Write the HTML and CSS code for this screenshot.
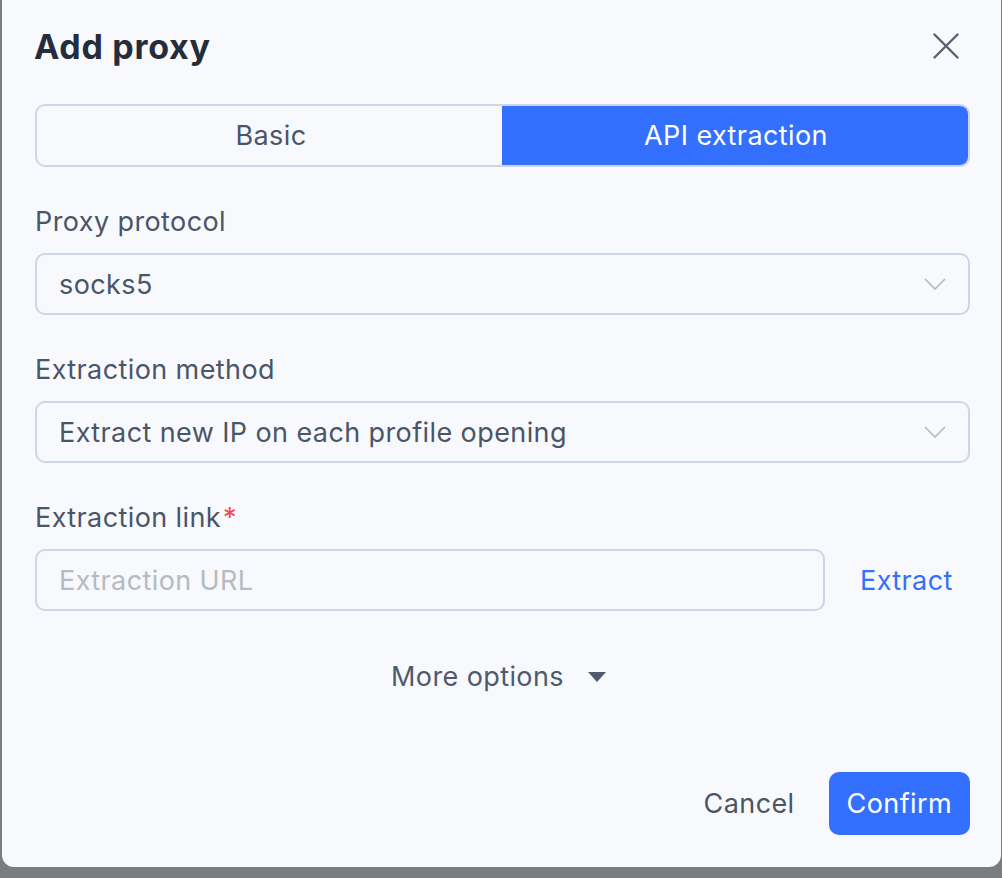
FILE: index.html
```html
<!DOCTYPE html>
<html lang="en">
<head>
    <meta charset="UTF-8">
    <meta name="viewport" content="width=device-width, initial-scale=1.0">
    <title>Add proxy</title>
    <link rel="stylesheet" href="styles.css">
</head>
<body>
    <div class="backdrop">
        <div class="dialog">
            <div class="dialog-header">
                <h1>Add proxy</h1>
                <button class="close-btn" aria-label="Close">
                    <svg width="26" height="26" viewBox="0 0 26 26">
                        <path d="M1.5 1.5 L24.5 24.5 M24.5 1.5 L1.5 24.5" stroke="#596070" stroke-width="2.4" stroke-linecap="round" fill="none"/>
                    </svg>
                </button>
            </div>

            <div class="tabs">
                <div class="tab">Basic</div>
                <div class="tab active">API extraction</div>
            </div>

            <div class="field">
                <label>Proxy protocol</label>
                <div class="select">
                    <span>socks5</span>
                    <svg class="chevron" width="22" height="12" viewBox="0 0 22 12">
                        <path d="M1 1 L11 11 L21 1" stroke="#b3b8c2" stroke-width="1.6" fill="none"/>
                    </svg>
                </div>
            </div>

            <div class="field">
                <label>Extraction method</label>
                <div class="select">
                    <span>Extract new IP on each profile opening</span>
                    <svg class="chevron" width="22" height="12" viewBox="0 0 22 12">
                        <path d="M1 1 L11 11 L21 1" stroke="#b3b8c2" stroke-width="1.6" fill="none"/>
                    </svg>
                </div>
            </div>

            <div class="field">
                <label>Extraction link<span class="required">*</span></label>
                <div class="input-row">
                    <input type="text" placeholder="Extraction URL">
                    <a class="link-btn" href="#">Extract</a>
                </div>
            </div>

            <div class="more-options">
                More options
                <svg width="18" height="10" viewBox="0 0 18 10">
                    <path d="M0 0 L18 0 L9 10 Z" fill="#4f5a6e"/>
                </svg>
            </div>

            <div class="dialog-footer">
                <button class="btn-text">Cancel</button>
                <button class="btn-primary">Confirm</button>
            </div>
        </div>
    </div>
</body>
</html>
```

FILE: styles.css
```css
body {
    margin: 0;
    padding: 0;
    background-color: #7b7c7e;
    font-family: Inter, "Noto Sans", sans-serif;
    font-size: 27px;
    letter-spacing: 0.4px;
    color: #4b5568;
    overflow: hidden;
}
.backdrop {
    height: 878px;
    padding-left: 2px;
}
.dialog {
    width: 999px;
    height: 867px;
    box-sizing: border-box;
    background-color: #f8f9fc;
    border-radius: 0 0 12px 12px;
    padding: 26px 31px 32px 33px;
    display: flex;
    flex-direction: column;
}
.dialog-header {
    display: flex;
    align-items: center;
    justify-content: space-between;
    height: 40px;
}
.dialog-header h1 {
    margin: 0 0 0 -1px;
    font-size: 34px;
    font-weight: 700;
    letter-spacing: 0.7px;
    color: #252c3b;
}
.close-btn {
    background: none;
    border: none;
    padding: 0;
    margin-right: 11px;
    display: flex;
    cursor: pointer;
}
.tabs {
    display: flex;
    margin-top: 38px;
    height: 63px;
    border: 2px solid #ccd6e8;
    border-radius: 10px;
    overflow: hidden;
    box-sizing: border-box;
}
.tab {
    flex: 1;
    display: flex;
    align-items: center;
    justify-content: center;
    color: #4b5568;
}
.tab.active {
    background-color: #3370ff;
    color: #fff;
    margin: -2px -2px -2px -3px;
}
.field {
    margin-top: 37px;
}
.field label {
    display: block;
    line-height: 36px;
    margin-bottom: 13px;
    color: #4b5568;
}
.required {
    color: #f5484a;
    margin-left: 2px;
}
.select {
    height: 62px;
    box-sizing: border-box;
    border: 2px solid #ccd6e8;
    border-radius: 10px;
    display: flex;
    align-items: center;
    justify-content: space-between;
    padding: 0 22px 0 22px;
    color: #4b5568;
}
.chevron {
    flex-shrink: 0;
}
.input-row {
    display: flex;
    align-items: center;
}
.input-row input {
    width: 790px;
    height: 62px;
    box-sizing: border-box;
    border: 2px solid #ccd6e8;
    border-radius: 10px;
    padding: 0 22px;
    font-family: inherit;
    font-size: 27px;
    letter-spacing: 0.4px;
    color: #4b5568;
    background: transparent;
    outline: none;
}
.input-row input::placeholder {
    color: #b6bac2;
}
.link-btn {
    margin-left: 35px;
    color: #3370ff;
    text-decoration: none;
}
.more-options {
    margin-top: 48px;
    padding-right: 8px;
    display: flex;
    align-items: center;
    justify-content: center;
    gap: 24px;
    line-height: 36px;
    color: #4f5a6e;
}
.dialog-footer {
    margin-top: auto;
    display: flex;
    justify-content: flex-end;
    align-items: center;
    gap: 34px;
}
.btn-text {
    background: none;
    border: none;
    padding: 0;
    font-family: inherit;
    font-size: 27px;
    letter-spacing: 0.4px;
    color: #4b5568;
    cursor: pointer;
}
.btn-primary {
    height: 63px;
    padding: 0 18px;
    border: none;
    border-radius: 10px;
    background-color: #3370ff;
    color: #fff;
    font-family: inherit;
    font-size: 27px;
    letter-spacing: 0.4px;
    cursor: pointer;
}
```
